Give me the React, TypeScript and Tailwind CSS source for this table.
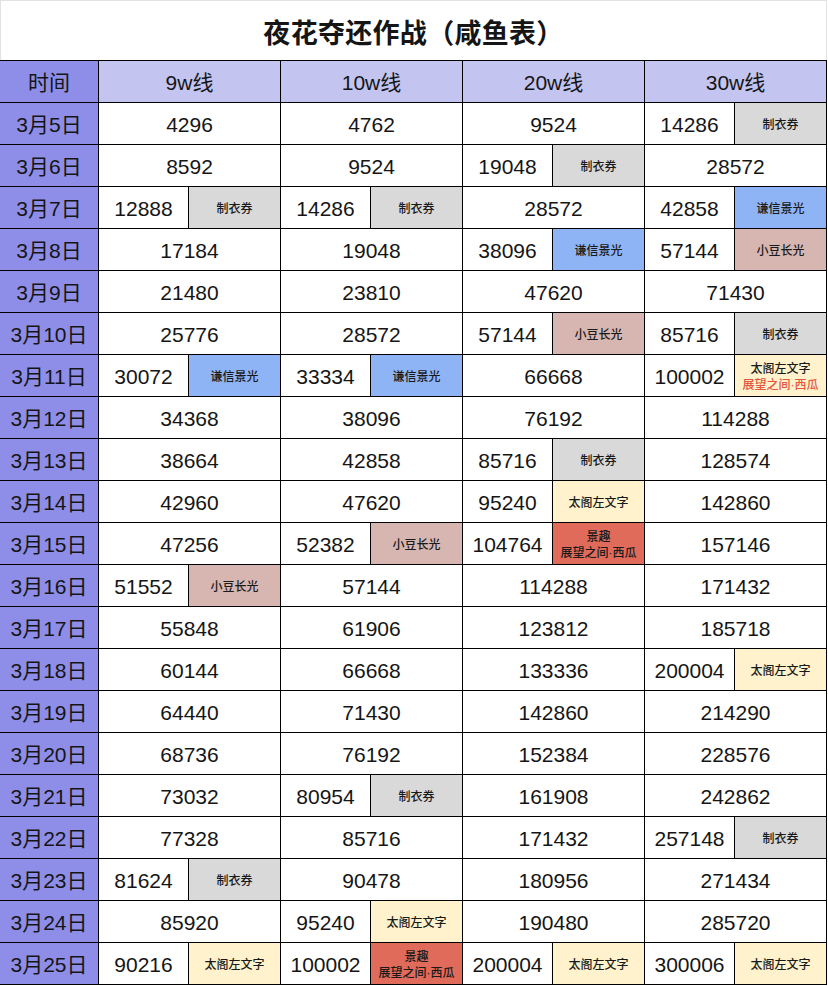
import { FC } from "react";

type Tag = "coupon" | "kenshin" | "azuki" | "taiko" | "taikoMelon" | "keishu";

type Cell = number | [number, Tag];

const rows: [string, Cell, Cell, Cell, Cell][] = [
  ["3月5日", 4296, 4762, 9524, [14286, "coupon"]],
  ["3月6日", 8592, 9524, [19048, "coupon"], 28572],
  ["3月7日", [12888, "coupon"], [14286, "coupon"], 28572, [42858, "kenshin"]],
  ["3月8日", 17184, 19048, [38096, "kenshin"], [57144, "azuki"]],
  ["3月9日", 21480, 23810, 47620, 71430],
  ["3月10日", 25776, 28572, [57144, "azuki"], [85716, "coupon"]],
  ["3月11日", [30072, "kenshin"], [33334, "kenshin"], 66668, [100002, "taikoMelon"]],
  ["3月12日", 34368, 38096, 76192, 114288],
  ["3月13日", 38664, 42858, [85716, "coupon"], 128574],
  ["3月14日", 42960, 47620, [95240, "taiko"], 142860],
  ["3月15日", 47256, [52382, "azuki"], [104764, "keishu"], 157146],
  ["3月16日", [51552, "azuki"], 57144, 114288, 171432],
  ["3月17日", 55848, 61906, 123812, 185718],
  ["3月18日", 60144, 66668, 133336, [200004, "taiko"]],
  ["3月19日", 64440, 71430, 142860, 214290],
  ["3月20日", 68736, 76192, 152384, 228576],
  ["3月21日", 73032, [80954, "coupon"], 161908, 242862],
  ["3月22日", 77328, 85716, 171432, [257148, "coupon"]],
  ["3月23日", [81624, "coupon"], 90478, 180956, 271434],
  ["3月24日", 85920, [95240, "taiko"], 190480, 285720],
  ["3月25日", [90216, "taiko"], [100002, "keishu"], [200004, "taiko"], [300006, "taiko"]],
];

const TagCell: FC<{ tag: Tag }> = ({ tag }) => {
  const base =
    "flex-1 flex flex-col items-center justify-center pt-[3px] text-[12px] font-medium leading-[16px] text-[#1a1a1a]";
  if (tag === "coupon") return <div className={`${base} bg-[#d9d9d9]`}>制衣券</div>;
  if (tag === "kenshin") return <div className={`${base} bg-[#8eb4f6]`}>谦信景光</div>;
  if (tag === "azuki") return <div className={`${base} bg-[#d7b6b2]`}>小豆长光</div>;
  if (tag === "taiko") return <div className={`${base} bg-[#fff2cc]`}>太阁左文字</div>;
  if (tag === "taikoMelon")
    return (
      <div className={`${base} bg-[#fff2cc]`}>
        <span>太阁左文字</span>
        <span className="text-[#e5553e]">展望之间·西瓜</span>
      </div>
    );
  return (
    <div className={`${base} bg-[#e06b5b]`}>
      <span>景趣</span>
      <span>展望之间·西瓜</span>
    </div>
  );
};

const DataCell: FC<{ cell: Cell }> = ({ cell }) => {
  if (typeof cell === "number")
    return (
      <div className="w-[182px] border-r border-black flex items-center justify-center pt-[3px]">
        {cell}
      </div>
    );
  return (
    <div className="w-[182px] border-r border-black flex">
      <div className="w-[90px] border-r border-black flex items-center justify-center pt-[3px]">
        {cell[0]}
      </div>
      <TagCell tag={cell[1]} />
    </div>
  );
};

export default function App() {
  return (
    <div
      className="w-[828px] h-[986px] bg-white text-[#151515]"
      style={{ fontFamily: '"Liberation Sans", "Noto Sans CJK SC", sans-serif' }}
    >
      <div className="w-[827px] h-[60px] border border-b-0 border-[#e2e2e2] flex items-center justify-center pt-[4px]">
        <h1
          className="text-[27px] font-bold tracking-[0.3px]"
          style={{ fontFamily: '"Noto Sans CJK SC", sans-serif' }}
        >
          夜花夺还作战（咸鱼表）
        </h1>
      </div>
      <div className="w-[827px] border-b border-black">
        <div className="flex h-[42px] border-t border-black text-[21px]">
          <div className="w-[99px] border-r border-black bg-[#8e8ee8] flex items-center justify-center pt-[3px]">
            时间
          </div>
          {["9w线", "10w线", "20w线", "30w线"].map((h) => (
            <div
              key={h}
              className="w-[182px] border-r border-black bg-[#c4c4f1] flex items-center justify-center pt-[3px]"
            >
              {h}
            </div>
          ))}
        </div>
        {rows.map((r) => (
          <div key={r[0]} className="flex h-[42px] border-t border-black text-[21px]">
            <div className="w-[99px] border-r border-black bg-[#8e8ee8] flex items-center justify-center pt-[3px]">
              {r[0]}
            </div>
            <DataCell cell={r[1]} />
            <DataCell cell={r[2]} />
            <DataCell cell={r[3]} />
            <DataCell cell={r[4]} />
          </div>
        ))}
      </div>
    </div>
  );
}
